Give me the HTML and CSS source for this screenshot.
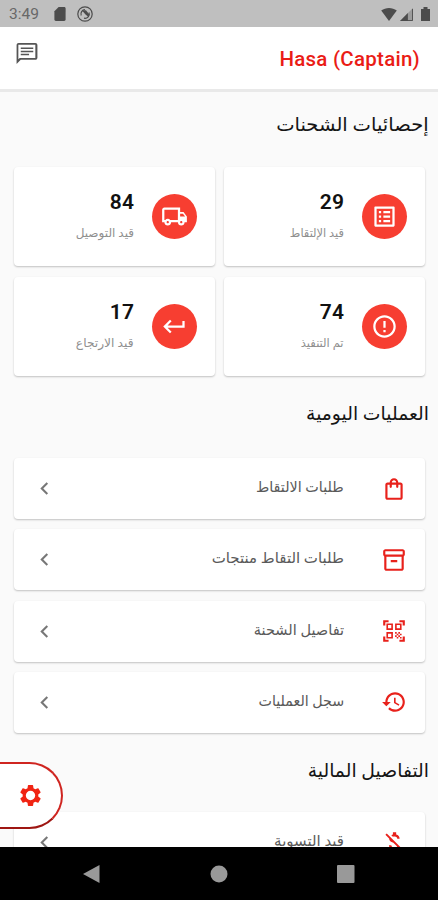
FILE: index.html
```html
<!DOCTYPE html>
<html lang="ar" dir="rtl">
<head>
<meta charset="utf-8">
<title>Hasa (Captain)</title>
<link rel="stylesheet" href="styles.css">
</head>
<body>
<div class="phone">
  <header class="status" dir="ltr">
    <span class="clock">3:49</span>
    <svg class="sd" viewBox="4 2 16 20"><path d="M18 2h-8L4 8v12c0 1.100.9 2 2 2h12c1.100 0 2-.9 2-2V4c0-1.100-.9-2-2-2z"/></svg>
    <svg class="sync" viewBox="0 0 16 16"><circle cx="8" cy="8" r="7.200" fill="none" stroke="currentColor" stroke-width="1.200"/><path d="M4.200 9.500A4.300 4.300 0 0 1 8 3.700M12 6.500A4.300 4.300 0 0 1 7 12.200" fill="none" stroke="currentColor" stroke-width="1.200"/><path d="M5 4.500 9 4.200 12.300 8.500 11.500 11 8.500 8.500z"/></svg>
    <span class="spacer"></span>
    <svg class="wifi" viewBox="0 0 24 20"><path d="M12 20 0 4C7-1.300 17-1.300 24 4z"/></svg>
    <svg class="signal" viewBox="0 0 14 14"><path d="M0 14 14 0v14z" opacity=".3"/><path d="M0 14 8.500 5.500v8.500z"/><path d="M1 13.500H13.500V1" fill="none" stroke="currentColor"/></svg>
    <svg class="battery" viewBox="0 0 9 14"><path d="M0 2h2.500V0h4v2H9v12H0z"/></svg>
  </header>
  <div class="appbar">
    <h1 dir="ltr">Hasa (Captain)</h1>
    <svg class="chat" viewBox="0 0 24 24"><path d="M4 3.700h16v12.600H5L3.700 17.600V3.700m.3-1.700c-1.100 0-1.990.9-1.990 2L2 22l4-4h14c1.100 0 2-.9 2-2V4c0-1.100-.9-2-2-2H4zm2 10.300h8v1.400H6zm0-3h12v1.400H6zm0-3h12v1.400H6z"/></svg>
  </div>
  <main class="content">
    <h2><span class="t-stats">إحصائيات الشحنات</span></h2>
    <section class="stats">
      <article class="card stat">
        <div class="disc"><svg viewBox="0 0 24 24"><path d="M19 5v14H5V5h14m1.100-2H3.900c-.5 0-.9.4-.9.9v16.200c0 .4.4.9.9.9h16.200c.4 0 .9-.5.9-.9V3.900c0-.5-.5-.9-.9-.9zM11 7h6v2h-6V7zm0 4h6v2h-6v-2zm0 4h6v2h-6zM7 7h2v2H7zm0 4h2v2H7zm0 4h2v2H7z"/></svg></div>
        <div class="figures"><b>29</b><span class="t-pick">قيد الإلتقاط</span></div>
      </article>
      <article class="card stat">
        <div class="disc"><svg viewBox="0 0 24 24"><path d="M20 8h-3V4H3c-1.100 0-2 .9-2 2v11h2c0 1.660 1.340 3 3 3s3-1.340 3-3h6c0 1.660 1.340 3 3 3s3-1.340 3-3h2v-5l-3-4zm-.5 1.500 1.960 2.500H17V9.500h2.500zM6 18c-.55 0-1-.45-1-1s.45-1 1-1 1 .45 1 1-.45 1-1 1zm2.220-3c-.55-.61-1.330-1-2.220-1s-1.670.39-2.220 1H3V6h12v9H8.220zM18 18c-.55 0-1-.45-1-1s.45-1 1-1 1 .45 1 1-.45 1-1 1z"/></svg></div>
        <div class="figures"><b>84</b><span class="t-deliver">قيد التوصيل</span></div>
      </article>
      <article class="card stat">
        <div class="disc"><svg viewBox="0 0 24 24"><path d="M11 15h2v2h-2zm0-8h2v6h-2zm.99-5C6.470 2 2 6.480 2 12s4.470 10 9.990 10C17.520 22 22 17.520 22 12S17.520 2 11.990 2zM12 20c-4.420 0-8-3.580-8-8s3.580-8 8-8 8 3.580 8 8-3.580 8-8 8z"/></svg></div>
        <div class="figures"><b>74</b><span class="t-done">تم التنفيذ</span></div>
      </article>
      <article class="card stat">
        <div class="disc"><svg viewBox="0 0 24 24"><path d="M19 7v4H5.830l3.580-3.590L8 6l-6 6 6 6 1.410-1.410L5.830 13H21V7z"/></svg></div>
        <div class="figures"><b>17</b><span class="t-return">قيد الارتجاع</span></div>
      </article>
    </section>
    <h2 class="daily"><span class="t-daily">العمليات اليومية</span></h2>
    <section class="list">
      <div class="card row">
        <svg class="ico" viewBox="0 0 24 24"><path d="M18 6h-2c0-2.210-1.790-4-4-4S8 3.790 8 6H6c-1.100 0-2 .9-2 2v12c0 1.100.9 2 2 2h12c1.100 0 2-.9 2-2V8c0-1.100-.9-2-2-2zm-6-2c1.100 0 2 .9 2 2h-4c0-1.100.9-2 2-2zm6 16H6V8h2v2c0 .55.45 1 1 1s1-.45 1-1V8h4v2c0 .55.45 1 1 1s1-.45 1-1V8h2v12z"/></svg>
        <span class="label t-orders">طلبات الالتقاط</span>
        <svg class="chev" viewBox="0 0 24 24"><path d="M15.410 7.410 14 6l-6 6 6 6 1.410-1.410L10.830 12z"/></svg>
      </div>
      <div class="card row">
        <svg class="ico" viewBox="0 0 24 24"><path d="M20 2H4c-1 0-2 .9-2 2v3.010c0 .72.43 1.340 1 1.690V20c0 1.100 1.100 2 2 2h14c.9 0 2-.9 2-2V8.700c.57-.35 1-.97 1-1.690V4c0-1.100-1-2-2-2zm-1 18H5V9h14v11zm1-13H4V4h16v3zM9 12h6v2H9z"/></svg>
        <span class="label t-products">طلبات التقاط منتجات</span>
        <svg class="chev" viewBox="0 0 24 24"><path d="M15.410 7.410 14 6l-6 6 6 6 1.410-1.410L10.830 12z"/></svg>
      </div>
      <div class="card row">
        <svg class="ico" viewBox="0 0 24 24"><path d="M9.500 6.500v3h-3v-3h3M11 5H5v6h6V5zm-1.500 9.500v3h-3v-3h3M11 13H5v6h6v-6zm6.500-6.500v3h-3v-3h3M19 5h-6v6h6V5zm-6 8h1.500v1.500H13V13zm1.500 1.500H16V16h-1.500v-1.500zM16 13h1.500v1.500H16V13zm-3 3h1.500v1.500H13V16zm1.500 1.500H16V19h-1.500v-1.500zM16 16h1.500v1.500H16V16zm1.500-1.500H19V16h-1.500v-1.500zm0 3H19V19h-1.500v-1.500zM22 7h-2V4h-3V2h5v5zm0 15v-5h-2v3h-3v2h5zM2 22h5v-2H4v-3H2v5zM2 2v5h2V4h3V2H2z"/></svg>
        <span class="label t-details">تفاصيل الشحنة</span>
        <svg class="chev" viewBox="0 0 24 24"><path d="M15.410 7.410 14 6l-6 6 6 6 1.410-1.410L10.830 12z"/></svg>
      </div>
      <div class="card row">
        <svg class="ico" viewBox="0 0 24 24"><path d="M13 3c-4.970 0-9 4.030-9 9H1l3.890 3.890.07.14L9 12H6c0-3.870 3.130-7 7-7s7 3.130 7 7-3.130 7-7 7c-1.930 0-3.680-.79-4.940-2.060l-1.420 1.420C8.270 19.990 10.510 21 13 21c4.970 0 9-4.030 9-9s-4.030-9-9-9zm-1 5v5l4.280 2.540.72-1.210-3.500-2.080V8H12z"/></svg>
        <span class="label t-log">سجل العمليات</span>
        <svg class="chev" viewBox="0 0 24 24"><path d="M15.410 7.410 14 6l-6 6 6 6 1.410-1.410L10.830 12z"/></svg>
      </div>
    </section>
    <h2 class="money"><span class="t-money">التفاصيل المالية</span></h2>
    <section class="list">
      <div class="card row">
        <svg class="ico" viewBox="0 0 24 24"><path d="M12.500 6.900c1.780 0 2.440.85 2.500 2.100h2.210c-.07-1.720-1.120-3.300-3.210-3.810V3h-3v2.160c-.53.12-1.030.3-1.480.54l1.470 1.470c.41-.17.91-.27 1.510-.27zM5.330 4.060 4.060 5.330 7.500 8.770c0 2.080 1.560 3.210 3.910 3.910l3.510 3.510c-.34.48-1.050.91-2.420.91-2.060 0-2.870-.92-2.980-2.100h-2.200c.12 2.190 1.760 3.420 3.680 3.830V21h3v-2.150c.96-.18 1.820-.55 2.450-1.120l2.220 2.220 1.270-1.270L5.330 4.060z"/></svg>
        <span class="label t-settle">قيد التسوية</span>
        <svg class="chev" viewBox="0 0 24 24"><path d="M15.410 7.410 14 6l-6 6 6 6 1.410-1.410L10.830 12z"/></svg>
      </div>
    </section>
  </main>
  <nav class="navbar" dir="ltr">
    <svg viewBox="0 0 18 18"><path d="M0 9 16.500 0v18z"/></svg>
    <svg viewBox="0 0 18 18"><circle cx="9" cy="9" r="8.500"/></svg>
    <svg viewBox="0 0 18 18"><rect width="17.500" height="18" rx="1"/></svg>
  </nav>
  <div class="fab"><svg viewBox="0 0 24 24"><path fill-rule="evenodd" d="M19.430 12.980c.04-.32.07-.64.07-.98s-.03-.66-.07-.98l2.110-1.650c.19-.15.24-.42.12-.64l-2-3.460c-.12-.22-.39-.3-.61-.22l-2.490 1c-.52-.4-1.080-.73-1.690-.98l-.38-2.650C14.460 2.180 14.250 2 14 2h-4c-.25 0-.46.18-.49.42l-.38 2.650c-.61.25-1.170.59-1.690.98l-2.490-1c-.23-.09-.49 0-.61.22l-2 3.460c-.13.22-.07.49.12.64l2.110 1.650c-.04.32-.07.65-.07.98s.03.66.07.98l-2.110 1.650c-.19.15-.24.42-.12.64l2 3.460c.12.22.39.3.61.22l2.490-1c.52.4 1.080.73 1.690.98l.38 2.650c.03.24.24.42.49.42h4c.25 0 .46-.18.49-.42l.38-2.650c.61-.25 1.170-.59 1.690-.98l2.490 1c.23.09.49 0 .61-.22l2-3.460c.12-.22.07-.49-.12-.64l-2.110-1.650zM12 16.500a4.500 4.500 0 1 1 0-9 4.500 4.500 0 0 1 0 9z"/></svg></div>
</div>
</body>
</html>
```

FILE: styles.css
```css
* { box-sizing: border-box; }
body { margin: 0; background: #fafafa; }
svg { display: block; flex: none; fill: currentColor; }
.phone {
  position: relative;
  display: flex;
  flex-direction: column;
  width: 438px;
  height: 900px;
  overflow: hidden;
  font-family: Roboto, "DejaVu Sans", sans-serif;
}
.status {
  flex: none;
  display: flex;
  align-items: center;
  height: 27px;
  padding: 1px 8px 0 9px;
  background: #bfbfbf;
  color: #4c4c4c;
}
.clock { width: 45px; font-size: 15.500px; color: #686868; }
.sd { width: 12px; height: 14px; }
.sync { width: 16px; height: 16px; margin-left: 11px; }
.spacer { flex: 1; }
.wifi { width: 16px; height: 13px; }
.signal { width: 13px; height: 13px; margin-left: 3px; }
.battery { width: 9px; height: 14px; margin-left: 8px; }
.appbar {
  flex: none;
  display: flex;
  justify-content: space-between;
  height: 65px;
  padding: 14px 18px 0 14px;
  background: #fff;
  border-bottom: 3px solid #e9e9e9;
}
.appbar h1 {
  margin: 4px 0 0;
  font-size: 20.500px;
  line-height: 28px;
  font-weight: 500;
  letter-spacing: .25px;
  color: #ea1c16;
}
.chat { width: 26px; height: 25px; color: #555; }
.content { flex: 1; min-height: 0; overflow: hidden; color: #151515; }
h2 {
  height: 75px;
  margin: 0;
  padding: 18px 9px 0;
  font-size: 18.800px;
  line-height: 30px;
  font-weight: 400;
}
h2 span, .figures span, .label { display: inline-block; white-space: nowrap; transform-origin: right center; }
.t-stats { transform: scaleX(1.040); }
.t-pick { transform: scaleX(.95); }
.t-done { transform: scaleX(.96); }
.t-return { transform: scaleX(1.020); }
.t-orders { transform: scaleX(.957); }
.t-details { transform: scaleX(.97); }
.t-log { transform: scaleX(.95); }
.stats { display: grid; grid-template-columns: 201px 201px; gap: 11px 9px; padding: 0 13px; }
.card { background: #fff; border-radius: 4px; box-shadow: 0 1px 2px rgba(0,0,0,.23); }
.stat { display: flex; align-items: center; gap: 18px; height: 99px; padding-right: 18px; }
.disc {
  display: grid;
  place-items: center;
  width: 45px;
  height: 45px;
  border-radius: 50%;
  background: #f73e31;
  color: #fff;
}
.disc svg { width: 27px; height: 27px; }
.figures { display: flex; flex-direction: column; align-items: flex-start; }
.figures b { padding-top: 1px; font-size: 21px; line-height: 30px; font-weight: 600; letter-spacing: .1px; color: #111; }
.figures span { margin-top: 2px; font-size: 12px; line-height: 28px; color: #8f8f8f; }
.daily, .money { height: 82px; padding-top: 23px; }
.money { height: 79px; }
.list { display: grid; gap: 10.300px; padding: 0 13px 0 14px; }
.row { display: flex; align-items: center; height: 61px; padding: 0 18px 0 18px; }
.ico { width: 26px; height: 26px; color: #e8211b; }
.label { margin-right: 37px; padding-bottom: 3px; font-size: 15px; color: #5a5a5a; }
.chev { width: 25px; height: 25px; margin-right: auto; color: #777; }
.navbar {
  flex: none;
  display: flex;
  justify-content: center;
  gap: 109px;
  height: 53px;
  padding-top: 18px;
  background: #000;
  color: #999;
}
.navbar svg { width: 18px; height: 18px; }
.fab {
  position: absolute;
  left: -40px;
  top: 762px;
  display: flex;
  align-items: center;
  width: 103px;
  height: 67px;
  padding-right: 18px;
  border: 2px solid #cf2520;
  border-bottom-color: #9e1612;
  border-radius: 34px;
  background: #fff;
  color: #f02413;
}
.fab svg { width: 25px; height: 25px; }
```
